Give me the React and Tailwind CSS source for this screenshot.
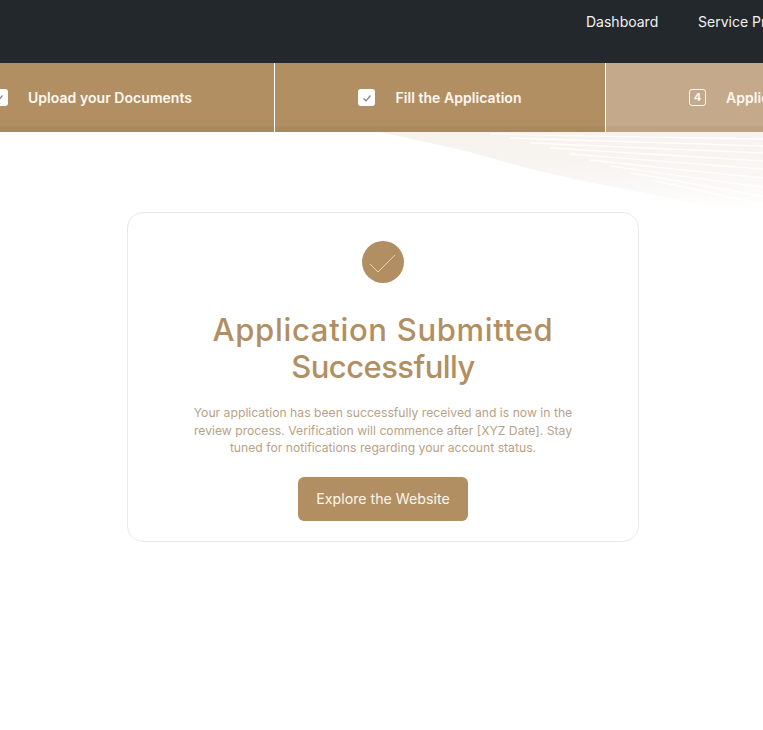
const lines = [
  "M110 2C200 4 300 6 383 7",
  "M130 6C220 9 310 12 383 14",
  "M150 11C235 14 315 18 383 21",
  "M170 16C245 20 320 25 383 29",
  "M190 22C255 27 325 33 383 37",
  "M210 28C265 34 330 41 383 46",
  "M230 34C280 41 335 49 383 55",
  "M250 41C295 48 340 57 383 64",
  "M275 49C310 56 350 65 383 73",
];

function Check() {
  return (
    <svg viewBox="0 0 16 16" className="h-4 w-4" fill="none" stroke="#8b8378" strokeWidth="1.3">
      <path d="M4.5 8.5 7 10.8 11.5 5.5" />
    </svg>
  );
}

export default function App() {
  return (
    <div className="relative h-[730px] w-full overflow-hidden bg-white font-['Inter',sans-serif]">
      <header className="flex h-[63px] items-start gap-10 overflow-hidden bg-[#23282c] pl-[586px] pt-[13px] text-[14px] leading-[17px] text-[#f2f2f2] whitespace-nowrap">
        <span className="w-[72px] shrink-0">Dashboard</span>
        <span className="shrink-0">Service Providers</span>
      </header>

      <nav className="relative z-10 -ml-[92px] flex h-[69px] w-[1100px] text-[14px] font-semibold tracking-[0.05px] text-[#fdf8f0] whitespace-nowrap">
        <div className="flex w-[367px] items-center justify-center gap-[20px] border-r border-white bg-[#b18f63] pl-[1px] shadow-[inset_0_-6px_0_#a98a60]">
          <span className="flex h-[17px] w-[17px] items-center justify-center rounded-[3px] bg-white"><Check /></span>
          <span>Upload your Documents</span>
        </div>
        <div className="flex w-[331px] items-center justify-center gap-[20px] border-r border-white bg-[#b18f63] shadow-[inset_0_-6px_0_#a98a60]">
          <span className="flex h-[17px] w-[17px] items-center justify-center rounded-[3px] bg-white"><Check /></span>
          <span>Fill the Application</span>
        </div>
        <div className="flex w-[331px] items-center justify-center gap-[20px] bg-[#c4a98a] pl-[2px] shadow-[inset_0_-6px_0_#bda382]">
          <span className="flex h-[17px] w-[17px] items-center justify-center rounded-[3px] border border-[#fdf8f0] text-[11px] font-bold">4</span>
          <span>Application Review</span>
        </div>
      </nav>

      <svg className="absolute left-[380px] top-[132px] h-[90px] w-[383px]" viewBox="0 0 383 90" fill="none" aria-hidden="true">
        <defs>
          <linearGradient id="wave" x1="0.35" y1="0" x2="0.55" y2="1">
            <stop offset="0" stopColor="#f6f2ed" />
            <stop offset="0.55" stopColor="#f9f6f3" />
            <stop offset="1" stopColor="#ffffff" />
          </linearGradient>
        </defs>
        <path d="M0 0H383V86C290 64 190 50 115 27C70 14 35 8 0 0Z" fill="url(#wave)" />
        {lines.map((d) => (
          <path key={d} d={d} stroke="#ffffff" strokeWidth="1.4" opacity="0.85" />
        ))}
      </svg>

      <main className="relative mt-[80px] flex justify-center pl-[3px]">
        <section className="flex h-[330px] w-[512px] flex-col items-center rounded-2xl border border-[#e9e9e9] bg-white pt-[28px]">
          <span className="flex h-[42px] w-[42px] items-center justify-center rounded-full bg-[#b18f63]">
            <svg viewBox="0 0 42 42" className="h-[42px] w-[42px]" fill="none" stroke="#f5e6cf" strokeWidth="0.8">
              <path d="M8 23 16 31 33 14" />
            </svg>
          </span>
          <h1 className="mt-[28px] w-[420px] text-center text-[31px] leading-[37px] font-medium text-[#b18f63]">
            <span className="block tracking-[0.7px]">Application Submitted</span>
            <span className="block tracking-[-0.55px]">Successfully</span>
          </h1>
          <p className="mt-[19px] w-[400px] text-center text-[12.2px] leading-[17.5px] text-[#b8a287]">
            Your application has been successfully received and is now in the review process. Verification will commence after [XYZ Date]. Stay tuned for notifications regarding your account status.
          </p>
          <button className="mt-[20px] h-[44px] w-[170px] rounded-md bg-[#b18f63] text-[14.2px] text-[#fdf6ea]">
            Explore the Website
          </button>
        </section>
      </main>
    </div>
  );
}
